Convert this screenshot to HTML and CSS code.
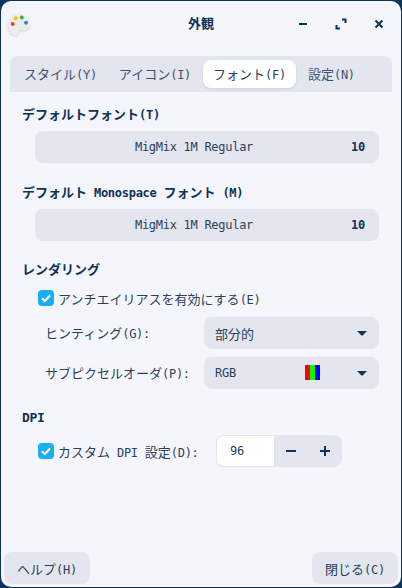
FILE: index.html
```html
<!DOCTYPE html>
<html lang="ja">
<head>
  <meta charset="UTF-8" />
  <meta name="viewport" content="width=device-width, initial-scale=1.0"/>
  <title>外観</title>

  <link rel="stylesheet" href="styles.css">
</head>
<body>
  <div class="window">
    <header class="titlebar">
      <svg class="app-icon" width="24" height="24" viewBox="0 0 24 24">
        <path d="M12 1.500C5.800 1.500 1 6 1 12c0 5.300 3.400 10.500 7.500 10.500 2 0 2.800-1.200 2.800-2.700 0-1.700.9-2.800 2.700-2.800h3.200C20.500 17 23 15 23 11.500 23 5.500 18 1.500 12 1.500z" fill="#ececec"/>
        <circle cx="5.700" cy="11" r="2" fill="#f0392f"/>
        <circle cx="8.700" cy="5.300" r="2" fill="#fbbc1b"/>
        <circle cx="14.800" cy="4.500" r="2" fill="#4caf3f"/>
        <circle cx="19" cy="9.800" r="2" fill="#2388f0"/>
      </svg>
      <h1 class="title">外観</h1>
      <div class="win-buttons">
        <svg width="12" height="12" viewBox="0 0 12 12"><path d="M2 6h8" class="win-stroke"/></svg>
        <svg width="12" height="12" viewBox="0 0 12 12"><path d="M7 1.500h3.500V5M5 10.500H1.500V7" class="win-stroke"/></svg>
        <svg width="12" height="12" viewBox="0 0 12 12"><path d="M2.500 2.500l7 7M9.500 2.500l-7 7" class="win-stroke"/></svg>
      </div>
    </header>

    <nav class="tabs">
      <a class="tab" href="#">スタイル<span class="mono">(Y)</span></a>
      <a class="tab" href="#">アイコン<span class="mono">(I)</span></a>
      <a class="tab active" href="#">フォント<span class="mono">(F)</span></a>
      <a class="tab" href="#">設定<span class="mono">(N)</span></a>
    </nav>

    <main class="content">
      <h2 class="heading">デフォルトフォント<span class="mono">(T)</span></h2>
      <div class="font-button">
        <span class="font-name mono">MigMix 1M Regular</span>
        <span class="font-size mono">10</span>
      </div>

      <h2 class="heading second">デフォルト<span class="mono"> Monospace </span>フォント<span class="mono"> (M)</span></h2>
      <div class="font-button">
        <span class="font-name mono">MigMix 1M Regular</span>
        <span class="font-size mono">10</span>
      </div>

      <h2 class="heading third">レンダリング</h2>
      <label class="check-row">
        <span class="checkbox"><svg width="12" height="12" viewBox="0 0 12 12"><path d="M2 6.200l2.800 2.800L10 3.500" class="check-mark"/></svg></span>
        <span>アンチエイリアスを有効にする<span class="mono">(E)</span></span>
      </label>

      <div class="select-row first">
        <span class="select-label">ヒンティング<span class="mono">(G):</span></span>
        <div class="select">
          <span>部分的</span>
          <span class="arrow"></span>
        </div>
      </div>
      <div class="select-row">
        <span class="select-label">サブピクセルオーダ<span class="mono">(P):</span></span>
        <div class="select">
          <span class="mono">RGB</span>
          <span class="rgb-sample"><i class="red"></i><i class="green"></i><i class="blue"></i></span>
          <span class="arrow"></span>
        </div>
      </div>

      <h2 class="heading fourth mono">DPI</h2>
      <div class="dpi-row">
        <label class="check-label">
          <span class="checkbox"><svg width="12" height="12" viewBox="0 0 12 12"><path d="M2 6.200l2.800 2.800L10 3.500" class="check-mark"/></svg></span>
          <span>カスタム<span class="mono"> DPI </span>設定<span class="mono">(D):</span></span>
        </label>
        <div class="spinner">
          <span class="spin-value mono">96</span>
          <span class="spin-button"><svg width="12" height="12" viewBox="0 0 12 12"><path d="M1 6h10" class="win-stroke"/></svg></span>
          <span class="spin-button"><svg width="12" height="12" viewBox="0 0 12 12"><path d="M1 6h10M6 1v10" class="win-stroke"/></svg></span>
        </div>
      </div>
    </main>

    <footer class="actions">
      <button class="action">ヘルプ<span class="mono">(H)</span></button>
      <button class="action">閉じる<span class="mono">(C)</span></button>
    </footer>
  </div>
</body>
</html>
```

FILE: styles.css
```css
html, body {
  height: 100%;
}

body {
  margin: 0;
  background: #0d3359;
  color: #2a3f5c;
  font-family: "Noto Sans CJK JP", sans-serif;
  font-size: 13px;
  overflow: hidden;
}

.mono {
  font-family: "DejaVu Sans Mono", monospace;
  font-size: 12px;
  letter-spacing: -0.28px;
  white-space: pre;
}

.window {
  height: 586px;
  margin: 1px;
  background: #f5f6fb;
  border-radius: 10px;
  display: flex;
  flex-direction: column;
}

.titlebar {
  height: 55px;
  flex-shrink: 0;
  display: flex;
  align-items: center;
  justify-content: center;
  position: relative;
}

.app-icon {
  position: absolute;
  left: 6px;
  top: 12px;
  filter: drop-shadow(0 1px 1px rgba(0, 0, 0, 0.15));
}

.title {
  margin: 0 0 12px;
  font-size: 13px;
  font-weight: 700;
  color: #0d3359;
}

.win-buttons {
  position: absolute;
  right: 16px;
  top: 17px;
  display: flex;
  gap: 26px;
}

.win-stroke {
  fill: none;
  stroke: #0d3359;
  stroke-width: 2;
}

.tabs {
  margin: 0 9px;
  height: 36px;
  padding: 4px 0 4px 4px;
  box-sizing: border-box;
  background: #e3e6ee;
  border-radius: 8px 8px 0 0;
  display: flex;
  gap: 2px;
}

.tab {
  height: 28px;
  line-height: 28px;
  padding: 0 10px;
  border-radius: 8px;
  color: #3c5270;
  text-decoration: none;
}

.tab.active {
  background: #fff;
  color: #2a3f5c;
  box-shadow: 0 1px 3px rgba(0, 0, 0, 0.1);
}

.content {
  flex: 1;
  padding: 0 22px 0 21px;
}

.heading {
  margin: 13px 0 8px;
  height: 18px;
  line-height: 18px;
  font-size: 13px;
  font-weight: 700;
  color: #0d3359;
}

.heading.second {
  margin-top: 20px;
}

.heading.third {
  margin-top: 19px;
  margin-bottom: 11px;
}

.heading.fourth {
  margin-top: 20px;
  margin-bottom: 8px;
}

.font-button {
  height: 32px;
  margin-left: 13px;
  background: #e3e6ee;
  border-radius: 8px;
  display: flex;
  align-items: center;
  position: relative;
}

.font-name {
  flex: 1;
  text-align: center;
  padding-right: 26px;
}

.font-size {
  position: absolute;
  right: 14px;
  font-weight: 700;
  color: #0d3359;
}

.check-row,
.check-label {
  display: flex;
  align-items: center;
  height: 18px;
  margin-left: 16px;
}

.check-label {
  width: 178px;
  flex-shrink: 0;
}

.checkbox {
  width: 16px;
  height: 16px;
  margin-right: 4px;
  border-radius: 4px;
  background: #1aaef5;
  display: flex;
  align-items: center;
  justify-content: center;
  flex-shrink: 0;
}

.check-mark {
  fill: none;
  stroke: #fff;
  stroke-width: 2;
}

.select-row {
  display: flex;
  align-items: center;
  margin: 8px 0 0 23px;
}

.select-row.first {
  margin-top: 10px;
}

.select-label {
  width: 159px;
  flex-shrink: 0;
  padding-bottom: 2px;
}

.select {
  flex: 1;
  height: 32px;
  padding: 0 12px 0 11px;
  background: #e3e6ee;
  border-radius: 8px;
  display: flex;
  align-items: center;
  position: relative;
}

.arrow {
  margin-left: auto;
  border-left: 5px solid transparent;
  border-right: 5px solid transparent;
  border-top: 5px solid #0d3359;
}

.rgb-sample {
  position: absolute;
  left: 101px;
  top: 8px;
  display: flex;
}

.rgb-sample i {
  width: 5px;
  height: 15px;
}

.red { background: #ff0000; }
.green { background: #00ff00; }
.blue { background: #0000ff; }

.dpi-row {
  display: flex;
  align-items: center;
}

.spinner {
  width: 126px;
  height: 32px;
  background: #e3e6ee;
  border-radius: 8px;
  display: flex;
  align-items: center;
  overflow: hidden;
}

.spin-value {
  width: 44px;
  height: 30px;
  line-height: 30px;
  padding-left: 13px;
  background: #fff;
  border: 1px solid #e3e6ee;
  border-right: 0;
  border-radius: 8px 0 0 8px;
}

.spin-button {
  width: 34px;
  display: flex;
  justify-content: center;
}

.actions {
  display: flex;
  justify-content: space-between;
  padding: 0 3px 3px;
}

.action {
  width: 86px;
  height: 32px;
  border: 0;
  border-radius: 8px;
  background: #e3e6ee;
  color: #2a3f5c;
  font-family: inherit;
  font-size: 13px;
}
```
